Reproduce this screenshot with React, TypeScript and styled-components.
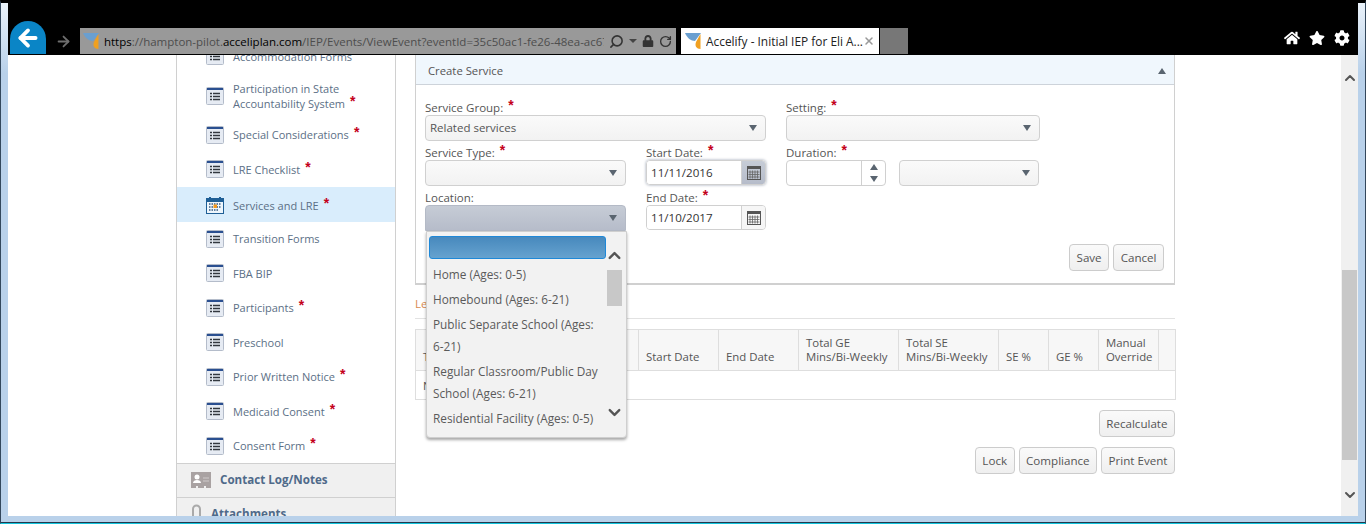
import React from 'react';
import styled, {createGlobalStyle} from 'styled-components';
import {ArrowLeft, ArrowRight, ChevronDown, ChevronUp, RotateCw, Search, X} from 'lucide-react';
import {FaCog, FaHome, FaLock, FaStar} from 'react-icons/fa';

const GlobalStyle = createGlobalStyle`
  html, body {
    margin: 0;
    padding: 0;
    background: #fff;
  }
  * {
    box-sizing: border-box;
  }
`;

const Window = styled.div`
  width: 1366px;
  height: 524px;
  display: flex;
  flex-direction: column;
  overflow: hidden;
  padding: 0 7px 7px;
  background: linear-gradient(180deg, #eaf2fa 0, #b9d1ea 70px);
  border-top: 3px solid #000;
  border-left: 1px solid #33475c;
  border-right: 1px solid #33475c;
  border-bottom: 1px solid #12c4dc;
  box-shadow: inset 0 -1px 0 #23384c;
  font-family: "Open Sans", "Liberation Sans", sans-serif;
  font-size: 12px;
  color: #555;
`;

const BrowserBar = styled.div`
  height: 52px;
  flex-shrink: 0;
  background: #000;
  display: flex;
  align-items: flex-end;
  padding: 0 0 1px 2px;
`;

const BackButton = styled.div`
  width: 36px;
  height: 33px;
  border-radius: 18px 18px 0 0 / 18px 18px 0 0;
  background: #0a85c6;
  display: flex;
  align-items: center;
  justify-content: center;
  color: #fff;
`;

const ForwardButton = styled.div`
  width: 34px;
  height: 26px;
  display: flex;
  align-items: center;
  justify-content: center;
  color: #6e6e6e;
`;

const AddressBar = styled.div`
  width: 596px;
  height: 26px;
  background: #999;
  display: flex;
  align-items: center;
  padding: 0 4px 0 3px;
  color: #222;
  font-size: 11.5px;
`;

const Url = styled.div`
  width: 502px;
  margin-left: 5px;
  white-space: nowrap;
  overflow: hidden;
  color: #4d4d4d;
`;

const UrlStrong = styled.span`
  color: #000;
`;

const AddressTools = styled.div`
  display: flex;
  align-items: center;
  gap: 5px;
  margin-left: 5px;
  color: #333;
`;

const MirroredSearch = styled(Search)`
  transform: scaleX(-1);
`;

const SmallCaret = styled.span`
  width: 0;
  height: 0;
  border-left: 4px solid transparent;
  border-right: 4px solid transparent;
  border-top: 4px solid #444;
`;

const Tab = styled.div`
  width: 198px;
  height: 26px;
  margin-left: 5px;
  background: #fff;
  display: flex;
  align-items: center;
  padding: 0 4px;
  color: #222;
  font-size: 11.9px;
  white-space: nowrap;
`;

const TabTitle = styled.span`
  margin-left: 5px;
  flex: 1;
  overflow: hidden;
`;

const NewTab = styled.div`
  width: 28px;
  height: 26px;
  margin-left: 1px;
  background: #777;
`;

const WindowTools = styled.div`
  margin-left: auto;
  height: 26px;
  display: flex;
  align-items: center;
  gap: 9px;
  padding: 0 8px 6px 0;
  color: #fff;
`;

const Viewport = styled.div`
  flex: 1;
  min-height: 0;
  display: flex;
  background: #fff;
  overflow: hidden;
`;

const Sidebar = styled.nav`
  width: 220px;
  margin-left: 168px;
  flex-shrink: 0;
  border-left: 1px solid #d0d0d0;
  border-right: 1px solid #d0d0d0;
`;

const NavList = styled.div`
  margin-top: -16px;
`;

const NavItem = styled.div<{ $active?: boolean }>`
  min-height: ${p => (p.$active ? '35px' : '34.5px')};
  display: flex;
  align-items: center;
  gap: 9px;
  padding: ${p => (p.$active ? '8px 8px 6px 29px' : '7px 8px 7px 29px')};
  line-height: 15px;
  color: #5b6f86;
  font-size: 11px;
  background: ${p => (p.$active ? '#d9edfc' : 'transparent')};
`;

const NavLabel = styled.span`
  flex: 1;
`;

const Required = styled.span`
  color: #c4001a;
  font-family: "Liberation Sans", sans-serif;
  font-size: 14px;
  font-weight: 700;
  line-height: 10px;
  margin-left: 5px;
  position: relative;
  top: -2px;
`;

const NavSection = styled.div<{ $indent: number }>`
  height: 34px;
  display: flex;
  align-items: center;
  gap: ${p => p.$indent}px;
  padding: 0 0 2px 14px;
  background: #f0f0f0;
  border-top: 1px solid #d0d0d0;
  color: #4f6a8a;
  font-size: 11.6px;
  font-weight: 700;
`;

const Main = styled.main`
  width: 760px;
  margin-left: 19px;
  flex-shrink: 0;
`;

const Panel = styled.section`
  border-left: 1px solid #d0d0d0;
  border-right: 1px solid #d0d0d0;
  border-bottom: 2px solid #d0d0d0;
`;

const PanelHeader = styled.header`
  height: 30px;
  display: flex;
  align-items: center;
  justify-content: space-between;
  padding: 2px 8px 0 12px;
  background: #f0f7fd;
  border-bottom: 1px solid #cdd3da;
  font-size: 11.3px;
`;

const UpCaret = styled.span`
  width: 0;
  height: 0;
  border-left: 4px solid transparent;
  border-right: 4px solid transparent;
  border-bottom: 6px solid #5a6570;
`;

const PanelBody = styled.div`
  padding: 15px 10px 12px 9px;
`;

const FormGrid = styled.div`
  display: grid;
  grid-template-columns: 201px 120px 254px;
  column-gap: 20px;
  row-gap: 4px;
`;

const Field = styled.div<{ $span?: number }>`
  grid-column: span ${p => p.$span || 1};
  position: relative;
`;

const Label = styled.div`
  height: 15px;
  line-height: 15px;
  font-size: 11.5px;
  color: #555;
`;

const Select = styled.div<{ $focused?: boolean; $width?: number }>`
  height: 26px;
  width: ${p => (p.$width ? `${p.$width}px` : '100%')};
  display: flex;
  align-items: center;
  justify-content: space-between;
  padding: 0 8px 2px 4px;
  border: 1px solid ${p => (p.$focused ? '#b4bac6' : '#d0d0d0')};
  border-radius: ${p => (p.$focused ? '4px 4px 0 0' : '4px')};
  background: ${p => (p.$focused ? 'linear-gradient(#c6ccd6, #b6bcca)' : 'linear-gradient(#fafafa, #f2f2f2)')};
  font-size: 11.5px;
  color: #555;
`;

const Caret = styled.span`
  width: 0;
  height: 0;
  margin: 2px 0 0 auto;
  border-left: 4px solid transparent;
  border-right: 4px solid transparent;
  border-top: 6px solid #5a6570;
`;

const DateGroup = styled.div<{ $focused?: boolean }>`
  height: 25px;
  display: flex;
  border: 1px solid #d0d0d0;
  border-radius: 4px;
  overflow: hidden;
  box-shadow: ${p => (p.$focused ? '0 0 3px #9aa3b2' : 'none')};
`;

const DateValue = styled.div`
  flex: 1;
  display: flex;
  align-items: center;
  padding: 0 0 1px 4px;
  color: #333;
  font-size: 11.6px;
  background: #fff;
`;

const DateAddon = styled.div<{ $focused?: boolean }>`
  width: 24px;
  display: flex;
  align-items: center;
  justify-content: center;
  border-left: 1px solid #d0d0d0;
  background: ${p => (p.$focused ? 'linear-gradient(#c6ccd6, #b6bcca)' : '#f6f6f6')};
`;

const DurationRow = styled.div`
  display: flex;
  gap: 13px;
`;

const Spinner = styled.div`
  width: 100px;
  height: 26px;
  display: flex;
  justify-content: flex-end;
  border: 1px solid #d0d0d0;
  border-radius: 4px;
  background: #fff;
`;

const SpinnerButtons = styled.div`
  width: 24px;
  display: flex;
  flex-direction: column;
  align-items: center;
  justify-content: center;
  gap: 6px;
  border-left: 1px solid #d0d0d0;
`;

const SpinDown = styled.span`
  width: 0;
  height: 0;
  border-left: 4px solid transparent;
  border-right: 4px solid transparent;
  border-top: 6px solid #5a6570;
`;

const Dropdown = styled.div`
  position: absolute;
  z-index: 5;
  top: 41px;
  left: 1px;
  width: 201px;
  height: 207px;
  display: flex;
  background: #f2f2f2;
  border: 1px solid #cfcfcf;
  border-radius: 0 0 4px 4px;
  box-shadow: 0 2px 3px rgba(0, 0, 0, 0.35);
`;

const OptionList = styled.div`
  width: 179px;
  padding: 4px 0 0 2px;
`;

const BlankOption = styled.div`
  height: 23px;
  width: 177px;
  margin-bottom: 2px;
  background: linear-gradient(#4789bd, #66a2cf);
  border: 1px solid #1e88d8;
  border-radius: 3px;
`;

const Option = styled.div`
  padding: 2px 3px 1px 4px;
  font-size: 11.8px;
  line-height: 22px;
  color: #5a5a5a;
`;

const ListRail = styled.div`
  width: 16px;
  margin-top: 4px;
  display: flex;
  flex-direction: column;
  align-items: center;
  color: #555;
`;

const RailThumb = styled.div`
  width: 15px;
  height: 36px;
  margin: 5px 0 auto;
  background: #c8c8c8;
`;

const RailEnd = styled.div`
  height: 19px;
  margin-top: 10px;
`;

const RailEndBottom = styled.div`
  height: 19px;
  margin-bottom: 15px;
`;

const ButtonRow = styled.div<{ $top: number }>`
  display: flex;
  justify-content: flex-end;
  gap: 4px;
  margin-top: ${p => p.$top}px;
`;

const Button = styled.button`
  height: 27px;
  padding: 0 6.5px 1px;
  border: 1px solid #ccc;
  border-radius: 4px;
  background: linear-gradient(#fafafa, #efefef);
  font-family: inherit;
  font-size: 11.6px;
  color: #555;
`;

const Legend = styled.div`
  margin-top: 11px;
  height: 23px;
  line-height: 16px;
  border-bottom: 1px solid #e2e2e2;
  color: #d98a50;
  font-size: 11.5px;
`;

const Table = styled.table`
  width: 760px;
  margin-top: 10px;
  table-layout: fixed;
  border-collapse: collapse;
  font-size: 11.4px;
`;

const HeadCell = styled.th`
  height: 41px;
  padding: 6px 7px 6px;
  vertical-align: bottom;
  text-align: left;
  font-weight: 400;
  line-height: 14px;
  color: #555;
  background: #f7f7f7;
  border: 1px solid #dedede;
`;

const BodyCell = styled.td`
  height: 29px;
  padding: 0 7px;
  color: #555;
  border: 1px solid #dedede;
`;

const PageScrollbar = styled.div`
  width: 17px;
  margin-left: auto;
  flex-shrink: 0;
  background: #f0f0f0;
  display: flex;
  flex-direction: column;
  align-items: center;
  color: #555;
`;

const ScrollArrowUp = styled.div`
  height: 16px;
  margin-top: 15px;
`;

const ScrollThumb = styled.div`
  width: 15px;
  height: 190px;
  margin-top: 184px;
  background: #c8c8c8;
`;

const ScrollArrowDown = styled.div`
  height: 16px;
  margin-top: 27px;
`;

const AccelifyLogo = () => (
    <svg width="16" height="18" viewBox="0 0 16 18">
        <path d="M0 1h16L10 9C6 9 2 6 0 1z" fill="#6a9fd0"/>
        <path d="M15.5 2v15c-4 0-6-3-4.500-7z" fill="#f0a020"/>
    </svg>
);

const ListIcon = () => (
    <svg width="18" height="18" viewBox="0 0 18 18">
        <rect x="0.500" y="0.500" width="17" height="17" rx="1" fill="#e6ebf3" stroke="#b4bcca"/>
        <rect x="1" y="1" width="16" height="2" fill="#2a4f90"/>
        <path d="M4 6.500h2M7 6.500h7M4 9.500h2M7 9.500h7M4 12.500h2M7 12.500h7" stroke="#33383f" strokeWidth="1.500"/>
    </svg>
);

const CalendarIcon = () => (
    <svg width="18" height="18" viewBox="0 0 18 18">
        <rect x="0.500" y="2.500" width="17" height="15" fill="#eef6fc" stroke="#1f5f96"/>
        <rect x="1" y="3" width="16" height="3" fill="#1f5f96"/>
        <path d="M4 1v3M14 1v3" stroke="#1f5f96" strokeWidth="2"/>
        <path d="M3 8h12M3 11h12M3 14h9" stroke="#355a80" strokeWidth="1.500" strokeDasharray="1.500 1"/>
        <rect x="7.500" y="8.500" width="3.500" height="3.500" fill="#f59a1e"/>
    </svg>
);

const DatePickerIcon = () => (
    <svg width="14" height="15" viewBox="0 0 14 15">
        <rect x="0.500" y="1.500" width="13" height="13" fill="none" stroke="#555"/>
        <rect x="1" y="2" width="12" height="2" fill="#555"/>
        <path d="M3 5.500v8M5.500 5.500v8M8 5.500v8M10.500 5.500v8M1.500 7h11M1.500 9.500h11M1.500 12h11" stroke="#666" strokeWidth="0.800"/>
    </svg>
);

const ContactIcon = () => (
    <svg width="20" height="16" viewBox="0 0 20 16">
        <path d="M0 0h20v16h-5v-2h-2v2H7v-2H5v2H0z" fill="#a9a2a2"/>
        <circle cx="6" cy="5" r="2.500" fill="#fff"/>
        <path d="M2 11c0-2 2-3 4-3s4 1 4 3z" fill="#fff"/>
        <path d="M12 6h6M12 9h6" stroke="#cfcaca"/>
    </svg>
);

const ClipIcon = () => (
    <svg width="11" height="20" viewBox="0 0 11 20">
        <path d="M2 18V5a3.500 3.500 0 0 1 7 0v13" fill="none" stroke="#aaa" strokeWidth="2"/>
    </svg>
);

const navItems = [
    {label: 'Accommodation Forms'},
    {label: 'Participation in State Accountability System', required: true},
    {label: 'Special Considerations', required: true},
    {label: 'LRE Checklist', required: true},
    {label: 'Services and LRE', required: true, active: true},
    {label: 'Transition Forms'},
    {label: 'FBA BIP'},
    {label: 'Participants', required: true},
    {label: 'Preschool'},
    {label: 'Prior Written Notice', required: true},
    {label: 'Medicaid Consent', required: true},
    {label: 'Consent Form', required: true},
];

const locationOptions = [
    'Home (Ages: 0-5)',
    'Homebound (Ages: 6-21)',
    'Public Separate School (Ages: 6-21)',
    'Regular Classroom/Public Day School (Ages: 6-21)',
    'Residential Facility (Ages: 0-5)',
];

const columns = [
    {title: 'Type', width: 112},
    {title: 'Service', width: 111},
    {title: 'Start Date', width: 80},
    {title: 'End Date', width: 80},
    {title: 'Total GE Mins/Bi-Weekly', width: 100},
    {title: 'Total SE Mins/Bi-Weekly', width: 100},
    {title: 'SE %', width: 50},
    {title: 'GE %', width: 50},
    {title: 'Manual Override', width: 60},
    {title: '', width: 17},
];

const FieldLabel = ({text, required}: { text: string, required?: boolean }) => (
    <Label>
        {text}
        {required && <Required>*</Required>}
    </Label>
);

const App = () => (
    <Window>
        <GlobalStyle/>
        <BrowserBar>
            <BackButton><ArrowLeft size={26} strokeWidth={3.5}/></BackButton>
            <ForwardButton><ArrowRight size={17} strokeWidth={2.5}/></ForwardButton>
            <AddressBar>
                <AccelifyLogo/>
                <Url>
                    <UrlStrong>https</UrlStrong>://hampton-pilot.<UrlStrong>acceliplan.com</UrlStrong>/IEP/Events/ViewEvent?eventId=35c50ac1-fe26-48ea-ac67
                </Url>
                <AddressTools>
                    <MirroredSearch size={15} strokeWidth={2.5}/>
                    <SmallCaret/>
                    <FaLock size={12}/>
                    <RotateCw size={13} strokeWidth={2.5}/>
                </AddressTools>
            </AddressBar>
            <Tab>
                <AccelifyLogo/>
                <TabTitle>Accelify - Initial IEP for Eli A...</TabTitle>
                <X size={12} strokeWidth={3} color="#999"/>
            </Tab>
            <NewTab/>
            <WindowTools>
                <FaHome size={16}/>
                <FaStar size={16}/>
                <FaCog size={16}/>
            </WindowTools>
        </BrowserBar>
        <Viewport>
            <Sidebar>
                <NavList>
                    {navItems.map(item => (
                        <NavItem key={item.label} $active={item.active}>
                            {item.active ? <CalendarIcon/> : <ListIcon/>}
                            <NavLabel>
                                {item.label}
                                {item.required && <Required>*</Required>}
                            </NavLabel>
                        </NavItem>
                    ))}
                </NavList>
                <NavSection $indent={9}><ContactIcon/>Contact Log/Notes</NavSection>
                <NavSection $indent={9}><ClipIcon/>Attachments</NavSection>
            </Sidebar>
            <Main>
                <Panel>
                    <PanelHeader>Create Service<UpCaret/></PanelHeader>
                    <PanelBody>
                        <FormGrid>
                            <Field $span={2}>
                                <FieldLabel text="Service Group:" required/>
                                <Select>Related services<Caret/></Select>
                            </Field>
                            <Field>
                                <FieldLabel text="Setting:" required/>
                                <Select><Caret/></Select>
                            </Field>
                            <Field>
                                <FieldLabel text="Service Type:" required/>
                                <Select><Caret/></Select>
                            </Field>
                            <Field>
                                <FieldLabel text="Start Date:" required/>
                                <DateGroup $focused>
                                    <DateValue>11/11/2016</DateValue>
                                    <DateAddon $focused><DatePickerIcon/></DateAddon>
                                </DateGroup>
                            </Field>
                            <Field>
                                <FieldLabel text="Duration:" required/>
                                <DurationRow>
                                    <Spinner>
                                        <SpinnerButtons><UpCaret/><SpinDown/></SpinnerButtons>
                                    </Spinner>
                                    <Select $width={140}><Caret/></Select>
                                </DurationRow>
                            </Field>
                            <Field>
                                <FieldLabel text="Location:"/>
                                <Select $focused><Caret/></Select>
                                <Dropdown>
                                    <OptionList>
                                        <BlankOption/>
                                        {locationOptions.map(option => <Option key={option}>{option}</Option>)}
                                    </OptionList>
                                    <ListRail>
                                        <RailEnd><ChevronUp size={19} strokeWidth={3}/></RailEnd>
                                        <RailThumb/>
                                        <RailEndBottom><ChevronDown size={19} strokeWidth={3}/></RailEndBottom>
                                    </ListRail>
                                </Dropdown>
                            </Field>
                            <Field>
                                <FieldLabel text="End Date:" required/>
                                <DateGroup>
                                    <DateValue>11/10/2017</DateValue>
                                    <DateAddon><DatePickerIcon/></DateAddon>
                                </DateGroup>
                            </Field>
                        </FormGrid>
                        <ButtonRow $top={13}>
                            <Button>Save</Button>
                            <Button>Cancel</Button>
                        </ButtonRow>
                    </PanelBody>
                </Panel>
                <Legend>Least Restrictive Environment</Legend>
                <Table>
                    <colgroup>
                        {columns.map((column, i) => <col key={i} width={column.width}/>)}
                    </colgroup>
                    <thead>
                        <tr>
                            {columns.map((column, i) => <HeadCell key={i}>{column.title}</HeadCell>)}
                        </tr>
                    </thead>
                    <tbody>
                        <tr>
                            <BodyCell colSpan={columns.length}>No records found</BodyCell>
                        </tr>
                    </tbody>
                </Table>
                <ButtonRow $top={10}>
                    <Button>Recalculate</Button>
                </ButtonRow>
                <ButtonRow $top={10}>
                    <Button>Lock</Button>
                    <Button>Compliance</Button>
                    <Button>Print Event</Button>
                </ButtonRow>
            </Main>
            <PageScrollbar>
                <ScrollArrowUp><ChevronUp size={16} strokeWidth={3}/></ScrollArrowUp>
                <ScrollThumb/>
                <ScrollArrowDown><ChevronDown size={16} strokeWidth={3}/></ScrollArrowDown>
            </PageScrollbar>
        </Viewport>
    </Window>
);

export default App;
